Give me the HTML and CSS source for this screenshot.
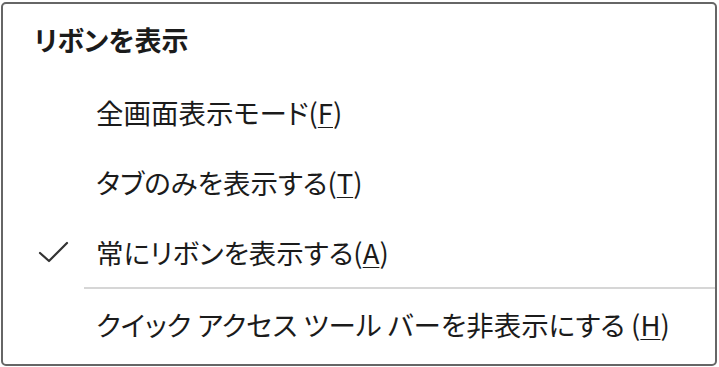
FILE: index.html
```html
<!DOCTYPE html>
<html lang="ja">
<head>
<meta charset="utf-8">
<link rel="stylesheet" href="styles.css">
</head>
<body>
<div class="menu">
  <div class="title">リボンを表示</div>
  <div class="item"><span class="check"></span><span class="label">全画面表示モード(<u>F</u>)</span></div>
  <div class="item"><span class="check"></span><span class="label">タブのみを表示する(<u>T</u>)</span></div>
  <div class="item"><span class="check"><svg width="32" height="24" viewBox="0 0 32 24"><path d="M2 13 L11 21 L29 3" fill="none" stroke="#333" stroke-width="2.2" stroke-linecap="round" stroke-linejoin="round"/></svg></span><span class="label">常にリボンを表示する(<u>A</u>)</span></div>
  <div class="sep"></div>
  <div class="item"><span class="check"></span><span class="label">クイック アクセス ツール バーを非表示にする (<u>H</u>)</span></div>
</div>
</body>
</html>
```
FILE: styles.css
```css
html, body {
  margin: 0;
  padding: 0;
  background: #fff;
}
body {
  width: 719px;
  height: 367px;
  overflow: hidden;
}
.menu {
  box-sizing: border-box;
  margin: 2px 0 0 1px;
  width: 716px;
  height: 364px;
  border: 2px solid #666;
  border-radius: 5px;
  background: #fff;
  font-family: "Noto Sans CJK JP", "Noto Sans", sans-serif;
  color: #1b1b1b;
  font-feature-settings: "palt";
}
.title {
  margin: 18px 0 0 31px;
  height: 36px;
  line-height: 36px;
  font-size: 27px;
  font-weight: bold;
}
.title + .item {
  margin-top: 19px;
}
.item {
  display: flex;
  align-items: center;
  height: 70px;
  font-size: 27.5px;
}
.check {
  width: 93px;
  display: flex;
  align-items: center;
  padding-left: 35px;
  box-sizing: border-box;
}
.check svg {
  display: block;
}
.label u {
  text-underline-offset: 3px;
  text-decoration-thickness: 1px;
}
.sep {
  height: 2px;
  background: #d6d6d6;
  margin-left: 81px;
}
```
